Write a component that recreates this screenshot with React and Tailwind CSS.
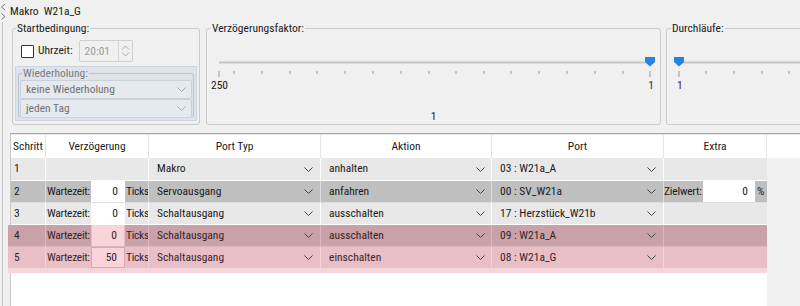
import React from "react";

function Chev({ className = "" }) {
  return (
    <svg width="9" height="5" viewBox="0 0 9 5" className={className}>
      <path d="M0.5 0.5 L4.5 4.5 L8.5 0.5" fill="none" stroke="currentColor" strokeWidth="1" />
    </svg>
  );
}

const KIND = {
  g1: { row: "bg-[#e8e8e8] text-[#1a1a1a]", sep: "border-white", inp: "bg-white" },
  g2: { row: "bg-[#bfbfbf] text-[#1a1a1a]", sep: "border-[#dedede]", inp: "bg-white" },
  p1: { row: "bg-[#c9a1a9] text-[#3a2328]", sep: "border-[#d9b7bd]", inp: "bg-[#f9d4d9] border-x border-[#e6bcc3]" },
  p2: { row: "bg-[#e8bfc6] text-[#3a2328]", sep: "border-[#f2d3d8]", inp: "bg-[#fad4da] border border-[#d8a8b0]" },
};

function Row({ r, first }) {
  const k = KIND[r.kind];
  const pink = r.kind === "p1" || r.kind === "p2";
  return (
    <div className={`flex ${first ? "h-[23px]" : "h-[22px]"} border-b ${k.sep} ${k.row}`}>
      <div className={`${pink ? "w-[38px] pl-[6px]" : "w-[35px] pl-[3px]"} flex-none flex items-center border-r ${k.sep}`}>{r.n}</div>
      <div className={`w-[103px] flex-none flex items-center overflow-hidden border-r ${k.sep}`}>
        {r.wait !== null && (
          <>
            <span className="w-[45px] flex-none pl-[1px] whitespace-nowrap tracking-[-0.3px]">Wartezeit:</span>
            <span className={`w-[34px] flex-none h-full flex items-center justify-end pr-[7px] ${k.inp}`}>{r.wait}</span>
            <span className="flex-none pl-[1px] tracking-[-0.3px]">Ticks</span>
          </>
        )}
      </div>
      <div className={`w-[172px] flex-none flex items-center justify-between pl-[8px] pr-[7px] border-r ${k.sep}`}>
        <span>{r.typ}</span>
        <Chev className="text-[#444]" />
      </div>
      <div className={`w-[171px] flex-none flex items-center justify-between pl-[8px] pr-[6px] border-r ${k.sep}`}>
        <span>{r.akt}</span>
        <Chev className="text-[#444]" />
      </div>
      <div className={`w-[172px] flex-none flex items-center justify-between pl-[8px] pr-[7px] border-r ${k.sep}`}>
        <span>{r.port}</span>
        <Chev className="text-[#444]" />
      </div>
      <div className="w-[103px] flex-none flex items-center overflow-hidden">
        {r.extra !== null && (
          <>
            <span className="w-[39px] flex-none whitespace-nowrap tracking-[-0.2px]">Zielwert:</span>
            <span className="w-[52px] flex-none h-full flex items-center justify-end pr-[7px] bg-white">{r.extra}</span>
            <span className="flex-none pl-[2px]">%</span>
          </>
        )}
      </div>
    </div>
  );
}

const ROWS = [
  { n: 1, kind: "g1", wait: null, typ: "Makro", akt: "anhalten", port: "03 : W21a_A", extra: null },
  { n: 2, kind: "g2", wait: "0", typ: "Servoausgang", akt: "anfahren", port: "00 : SV_W21a", extra: "0" },
  { n: 3, kind: "g1", wait: "0", typ: "Schaltausgang", akt: "ausschalten", port: "17 : Herzstück_W21b", extra: null },
  { n: 4, kind: "p1", wait: "0", typ: "Schaltausgang", akt: "ausschalten", port: "09 : W21a_A", extra: null },
  { n: 5, kind: "p2", wait: "50", typ: "Schaltausgang", akt: "einschalten", port: "08 : W21a_G", extra: null },
];

function Slider({ width, start, end, thumb, xs, longs }) {
  return (
    <svg width={width} height="24" viewBox={`0 0 ${width} 24`} className="block">
      <rect x={start} y="6.5" width={end - start} height="2" fill="#c6c6c6" />
      {xs.map((x) => (
        <rect key={x} x={x - 0.5} y="16" width="1" height={longs.includes(x) ? 6 : 3} fill="#9a9a9a" />
      ))}
      <path d={`M${thumb - 5} 2 H${thumb + 5} V7 L${thumb} 11.5 L${thumb - 5} 7 Z`} fill="#2684e0" />
    </svg>
  );
}

const VX = [12, 27, 55, 83, 110, 138, 166, 194, 222, 249, 277, 304, 332, 360, 388, 416, 443];
const DX = [12, 39, 67, 95, 122];

export default function App() {
  return (
    <div className="w-[800px] h-[306px] overflow-hidden bg-[#f0f0f0] flex text-[11.5px] text-[#1a1a1a] font-['Roboto_Condensed','DejaVu_Sans_Condensed',sans-serif]">
      <div className="w-[10px] flex-none flex flex-col">
        <svg width="8" height="22" viewBox="0 0 8 22" className="block">
          <path d="M5 4 L1.5 7 L5 10" fill="none" stroke="#7a7a7a" strokeWidth="1" />
          <path d="M1.5 13.5 L5 16.5 L1.5 19.5" fill="none" stroke="#7a7a7a" strokeWidth="1" />
        </svg>
        <div className="ml-[2px] w-px flex-1 bg-[#c4c4c4]" />
      </div>
      <div className="flex-1 min-w-0 flex flex-col">
        <div className="h-[20px] pt-[1px] leading-[20px] whitespace-pre">Makro  W21a_G</div>
        <div className="flex pl-[2px] gap-[6px]">
          <fieldset className="w-[188px] h-[105px] flex-none border border-[#cacaca] rounded-[3px]">
            <legend className="ml-[3px] px-[1px] leading-[16px]">Startbedingung:</legend>
            <div className="mt-[4px] h-[22px] flex items-center">
              <span className="ml-[8px] w-[13px] h-[13px] flex-none border border-[#333] bg-white rounded-[1px]" />
              <span className="ml-[4px]">Uhrzeit:</span>
              <span className="ml-[6px] w-[54px] h-[22px] flex-none flex border border-[#cfcfcf] rounded-[2px]">
                <span className="flex-1 pl-[5px] leading-[20px] text-[#9a9a9a]">20:01</span>
                <span className="w-[14px] border-l border-[#d6d6d6] flex items-center justify-center">
                  <svg width="9" height="12" viewBox="0 0 9 12">
                    <path d="M1 4.5 L4.5 1 L8 4.5 M1 7.5 L4.5 11 L8 7.5" fill="none" stroke="#a8a8a8" strokeWidth="1" />
                  </svg>
                </span>
              </span>
            </div>
            <div className="mt-[4px] ml-[2px] w-[182px] h-[55px] bg-[#dfe4ea] border border-[#cdd4dc]">
              <fieldset className="mx-[2px] h-[50px] border border-[#bcc5cf] rounded-[2px]">
                <legend className="ml-[3px] px-[1px] leading-[12px] text-[#7a7a7a]">Wiederholung:</legend>
                <div className="mt-[1px] mx-[1px] h-[19px] flex items-center justify-between pl-[5px] pr-[5px] bg-[#e6e9ee] border border-[#cbd1d8] rounded-[2px] text-[#707070]">
                  <span>keine Wiederholung</span>
                  <Chev className="text-[#a6abb2]" />
                </div>
                <div className="mx-[1px] h-[19px] flex items-center justify-between pl-[5px] pr-[5px] bg-[#e6e9ee] border border-[#cbd1d8] rounded-[2px] text-[#707070]">
                  <span>jeden Tag</span>
                  <Chev className="text-[#a6abb2]" />
                </div>
              </fieldset>
            </div>
          </fieldset>
          <fieldset className="w-[455px] h-[105px] flex-none border border-[#cacaca] rounded-[3px]">
            <legend className="ml-[4px] px-[1px] leading-[16px]">Verzögerungsfaktor:</legend>
            <div className="mt-[19px]">
              <Slider width={453} start={12} end={443} thumb={443} xs={VX} longs={[12, 443]} />
            </div>
            <div className="h-[12px] leading-[12px] flex justify-between pl-[4px] pr-[6px]">
              <span>250</span>
              <span className="text-[#4a1f33]">1</span>
            </div>
            <div className="mt-[19px] h-[12px] leading-[12px] text-center">1</div>
          </fieldset>
          <fieldset className="w-[160px] h-[105px] flex-none -ml-[1px] border border-[#cacaca] rounded-[3px]">
            <legend className="ml-[4px] px-[1px] leading-[16px]">Durchläufe:</legend>
            <div className="mt-[19px]">
              <Slider width={158} start={12} end={158} thumb={12} xs={DX} longs={[12]} />
            </div>
            <div className="h-[12px] leading-[12px] pl-[10px] text-[#4a1f33]">1</div>
          </fieldset>
        </div>
        <div className="mt-[8px] flex-1 flex flex-col border-t border-l border-t-[#a8a8a8] border-l-[#c8c8c8]">
          <div className="h-[24px] flex bg-white border-t border-[#e6e6e6]">
            <div className="w-[35px] flex-none flex items-center justify-center border-r border-[#e5e5e5]">Schritt</div>
            <div className="w-[103px] flex-none flex items-center justify-center border-r border-[#e5e5e5]">Verzögerung</div>
            <div className="w-[172px] flex-none flex items-center justify-center border-r border-[#e5e5e5]">Port Typ</div>
            <div className="w-[171px] flex-none flex items-center justify-center border-r border-[#e5e5e5]">Aktion</div>
            <div className="w-[172px] flex-none flex items-center justify-center border-r border-[#e5e5e5]">Port</div>
            <div className="w-[103px] flex-none flex items-center justify-center border-r border-[#e5e5e5]">Extra</div>
            <div className="flex-1" />
          </div>
          <div className="flex-1 flex">
            <div className="w-[756px] flex-none bg-white flex flex-col">
              <Row r={ROWS[0]} first />
              <Row r={ROWS[1]} />
              <Row r={ROWS[2]} />
              <div className="-ml-[3px] w-[759px] bg-[#f6d6db] pb-[4px]">
                <Row r={ROWS[3]} />
                <Row r={ROWS[4]} />
              </div>
            </div>
            <div className="flex-1 bg-[#f0f0f0]" />
          </div>
        </div>
      </div>
    </div>
  );
}
